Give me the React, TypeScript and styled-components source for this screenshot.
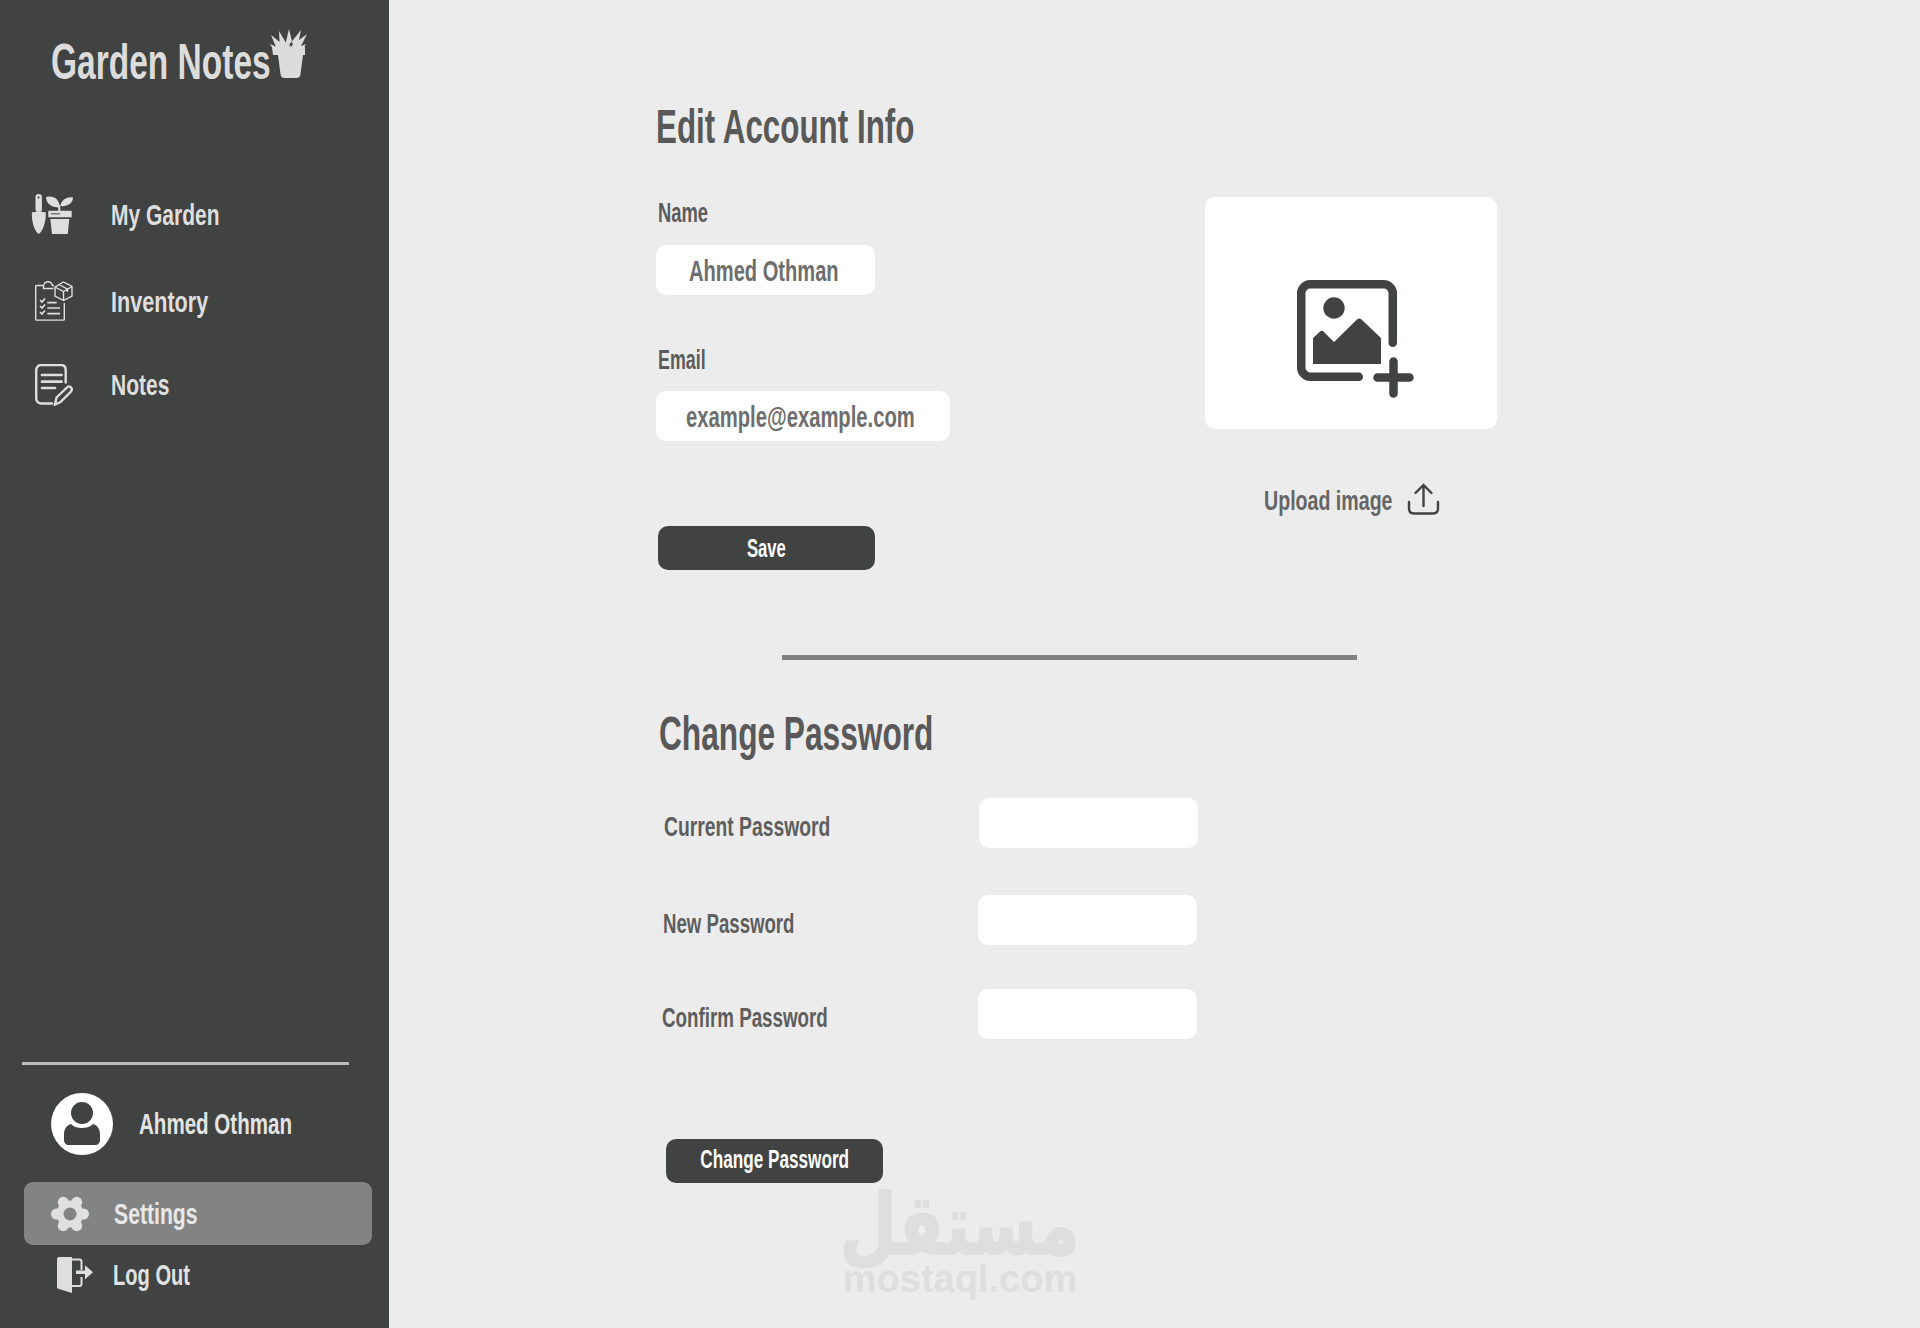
import styled, { createGlobalStyle } from 'styled-components';

const GlobalStyle = createGlobalStyle`
  html, body {
    margin: 0;
    padding: 0;
    background: #ececec;
  }
  * {
    box-sizing: border-box;
  }
`;

const Page = styled.div`
  display: flex;
  width: 1920px;
  height: 1328px;
  overflow: hidden;
  position: relative;
  font-family: "Liberation Sans Narrow", "Liberation Sans", sans-serif;
  font-weight: 700;
`;

// the reference font is very condensed, nothing installed is that narrow
const Squeeze = styled.span<{ $x: number; $center?: boolean }>`
  display: inline-block;
  white-space: nowrap;
  transform: scaleX(${({ $x }) => $x});
  transform-origin: ${({ $center }) => ($center ? 'center' : 'left')};
`;

const Sidebar = styled.aside`
  width: 389px;
  height: 1328px;
  flex: none;
  background: #414342;
  color: #dedede;
  display: flex;
  flex-direction: column;
`;

const Logo = styled.div`
  display: flex;
  align-items: flex-end;
  height: 50px;
  margin: 29px 0 0 51px;
  font-size: 50px;
  line-height: 50px;
`;

const LogoText = styled.div`
  width: 219px;
  height: 46px;
  margin-bottom: -4px;
  color: #dcdcdc;
`;

const Nav = styled.nav`
  display: flex;
  flex-direction: column;
  margin-top: 95px;
`;

const NavItem = styled.div<{ $top: number; $iconLeft: number }>`
  display: flex;
  align-items: center;
  height: 82px;
  margin-top: ${({ $top }) => $top}px;
  padding-left: ${({ $iconLeft }) => $iconLeft}px;
  font-size: 30px;
`;

const NavIcon = styled.div<{ $width: number }>`
  width: ${({ $width }) => $width}px;
  display: flex;
  flex: none;
`;

const SidebarBottom = styled.div`
  margin-top: auto;
  padding-bottom: 31px;
  display: flex;
  flex-direction: column;
`;

const SideRule = styled.div`
  width: 327px;
  height: 3px;
  margin-left: 22px;
  background: #bcbcbc;
`;

const UserRow = styled.div`
  display: flex;
  align-items: center;
  gap: 26px;
  margin: 28px 0 0 51px;
  font-size: 30px;
  color: #e4e4e4;
`;

const SettingsRow = styled.div`
  display: flex;
  align-items: center;
  width: 348px;
  height: 63px;
  margin: 27px 0 0 24px;
  padding-left: 27px;
  gap: 25px;
  border-radius: 9px;
  background: #828483;
  font-size: 30px;
  color: #e8e8e8;
`;

const LogoutRow = styled.div`
  display: flex;
  align-items: center;
  height: 44px;
  margin: 8px 0 0 57px;
  gap: 20px;
  font-size: 30px;
  color: #e2e2e2;
`;

const Main = styled.main`
  flex: 1;
  padding: 100px 0 0 267px;
  color: #5a5a5a;
`;

const TopRow = styled.div`
  display: flex;
`;

const AccountForm = styled.section`
  width: 549px;
`;

const Heading = styled.h2<{ $left?: number }>`
  margin: 0 0 0 ${({ $left }) => $left ?? 0}px;
  height: 50px;
  font-size: 49px;
  line-height: 52px;
  font-weight: 700;
  color: #595959;
`;

const FieldLabel = styled.div<{ $top: number }>`
  height: 24px;
  line-height: 25px;
  margin: ${({ $top }) => $top}px 0 0 2px;
  font-size: 28px;
  color: #5c5c5c;
`;

const TextBox = styled.div<{ $width: number; $top: number; $pad: number }>`
  display: flex;
  align-items: center;
  width: ${({ $width }) => $width}px;
  height: 50px;
  margin-top: ${({ $top }) => $top}px;
  padding: 1px 0 0 ${({ $pad }) => $pad}px;
  border-radius: 10px;
  background: #fff;
  color: #6e6e6e;
  font-size: 30px;
`;

const DarkButton = styled.button<{ $left: number; $top: number; $up?: number }>`
  display: flex;
  align-items: center;
  justify-content: center;
  width: 217px;
  height: 44px;
  margin: ${({ $top }) => $top}px 0 0 ${({ $left }) => $left}px;
  padding: 0 0 ${({ $up }) => $up ?? 0}px;
  border: none;
  border-radius: 10px;
  background: #414342;
  color: #fff;
  font-family: inherit;
  font-weight: 700;
  font-size: 26px;
`;

const ImageColumn = styled.section`
  width: 292px;
  margin-top: 97px;
`;

const ImageBox = styled.div`
  display: flex;
  align-items: center;
  justify-content: center;
  height: 232px;
  padding: 52px 0 0 10px;
  border-radius: 10px;
  background: #fff;
`;

const UploadRow = styled.div`
  display: flex;
  align-items: center;
  margin: 53px 0 0 59px;
  height: 34px;
  color: #666;
  font-size: 28px;
`;

const UploadLabel = styled.div`
  width: 143px;
  padding-top: 3px;
`;

const SectionRule = styled.div`
  width: 575px;
  height: 5px;
  margin: 85px 0 47px 126px;
  background: #808080;
`;

const PasswordRow = styled.div<{ $top: number; $left: number }>`
  display: flex;
  height: 50px;
  margin-top: ${({ $top }) => $top}px;
  padding-left: ${({ $left }) => $left}px;
`;

const PasswordLabel = styled.div<{ $width: number }>`
  width: ${({ $width }) => $width}px;
  padding-top: 14px;
  line-height: 30px;
  font-size: 27px;
  color: #5e5e5e;
`;

const PasswordBox = styled.div`
  width: 219px;
  height: 50px;
  border-radius: 10px;
  background: #fff;
`;

const Watermark = styled.div`
  position: absolute;
  left: 844px;
  top: 1189px;
  width: 232px;
  display: flex;
  flex-direction: column;
  align-items: center;
  color: #dedede;
  pointer-events: none;
`;

const WatermarkArabic = styled.div`
  font-family: "DejaVu Sans", sans-serif;
  font-weight: 700;
  font-size: 84px;
  line-height: 72px;
  -webkit-text-stroke: 2px #dedede;
`;

const WatermarkLatin = styled.div`
  font-family: "Liberation Sans", sans-serif;
  font-weight: 700;
  font-size: 38px;
  line-height: 36px;
`;

function PlantLogo() {
  return (
    <svg width="37" height="50" viewBox="0 0 37 50" fill="#dcdcdc">
      <path d="M2 18h33v8h-2l-2.500 19c-.3 2.500-1.500 4-4 4h-12c-2.500 0-3.700-1.500-4-4L8 26H3z" />
      <path d="M14 21L19 0l5 21zM10 21L9 2l10 17zM8 23L1 6l15 12zM6 25L0 15l13 6zM27 21l4-20-12 15zM28 23l9-18-17 13zM30 25l6-10-14 6z" />
    </svg>
  );
}

function GardenIcon() {
  return (
    <svg width="42" height="42" viewBox="0 0 42 42" fill="#dedede">
      <rect x="4.500" y="0" width="6.400" height="18" rx="3.200" />
      <rect x="6.800" y="2.300" width="1.500" height="2.200" fill="#414342" />
      <path d="M1 18c2 1 4-1 6.700-1s5 2 7 1c.8 8-2.700 20-7 22-4.200-2-7.700-14-6.700-22z" />
      <path d="M28.500 13.500C22 14 15 10 15 3c7-2 14 2 13.500 10.500zM29.500 12c.5-6 6.500-10 12.500-8.500 0 5.500-6 9.500-12.500 8.500z" />
      <rect x="27.300" y="11" width="2" height="6" />
      <path d="M17.300 16.800h23.400v6.500H17.300z" />
      <rect x="20" y="19.300" width="9" height="1" fill="#414342" />
      <path d="M19.300 25h19l-1.600 15H21z" />
    </svg>
  );
}

function InventoryIcon() {
  return (
    <svg width="38" height="42" viewBox="0 0 38 42" fill="none" stroke="#dedede" strokeWidth="1.400">
      <path d="M19 4.500h-1.500C16.500 1.500 14.500.7 13 .7S9.500 1.500 8.500 4.500H1.500c-.5 0-.8.3-.8.8v33c0 .5.3.8.8.8h27c.5 0 .8-.3.8-.8V22" />
      <path d="M8.500 4.500v3h10" />
      <path d="M20 6l8.500-5L37 5.500v9.500l-8.500 4.500L20 15zM20 6l8.500 4.500L37 5.500M28.500 10.500v9M24 3.500l8.500 4.600v3" />
      <path d="M5 19l2 2 3-3.500M5 25l2 2 3-3.500M5 31l2 2 3-3.500" strokeWidth="1.700" />
      <path d="M12.300 21.700h9.400M12.300 27H25M12.300 32.700H25" strokeWidth="1.700" />
    </svg>
  );
}

function NotesIcon() {
  return (
    <svg width="38" height="42" viewBox="0 0 38 42" fill="none" stroke="#dedede" strokeWidth="2.400" strokeLinecap="round">
      <path d="M17 39.500H6.500c-3 0-5.300-2-5.300-5V6.500c0-3.500 2.300-5.500 5.300-5.500h19.500c3 0 4.700 2 4.700 5v12.500" />
      <path d="M7 11h19.500M7 17.700h19.500M7 24h13" strokeWidth="2.700" />
      <path d="M20 40.500l1.500-7L32 23.500c1.500-1.500 3-1.500 4 0 1 1 1 2.500 0 4L25.500 38z" />
    </svg>
  );
}

function Avatar() {
  return (
    <svg width="62" height="62" viewBox="0 0 62 62">
      <circle cx="31" cy="31" r="31" fill="#fff" />
      <circle cx="31" cy="20" r="11" fill="#414342" />
      <path d="M20 31c3 3 7 4 11 4s8-1 11-4c4 1 7 5 7 10v6c0 3-2 5-5 5H18c-3 0-5-2-5-5v-6c0-5 3-9 7-10z" fill="#414342" />
    </svg>
  );
}

const gearLobes = [0, 60, 120, 180, 240, 300];

function GearIcon() {
  return (
    <svg width="38" height="38" viewBox="-19 -19 38 38" fill="#e0e0e0">
      <circle r="13.500" />
      {gearLobes.map(angle => (
        <circle
          key={angle}
          cx={13.5 * Math.cos((angle * Math.PI) / 180)}
          cy={13.5 * Math.sin((angle * Math.PI) / 180)}
          r="5.500"
        />
      ))}
      <circle r="6.500" fill="#828483" />
    </svg>
  );
}

function LogoutIcon() {
  return (
    <svg width="36" height="37" viewBox="0 0 36 37" fill="#dedede">
      <path d="M2 0h13v36L2 32c-1 0-2-1-2-2V2c0-1 1-2 2-2z" />
      <path d="M15 2.500h7.500c1 0 2 1 2 2V13M24.500 20v7c0 1-1 2-2 2H15" fill="none" stroke="#dedede" strokeWidth="2" />
      <path d="M19 13.500h9V8.300l8 7-8 7v-5.200h-9z" />
    </svg>
  );
}

function ImagePlusIcon() {
  return (
    <svg width="118" height="118" viewBox="0 0 118 118">
      <path
        d="M61.750 96.750H13c-4.500 0-8.750-4.250-8.750-8.750V13c0-4.500 4.250-8.750 8.750-8.750h74c4.500 0 8.750 4.250 8.750 8.750v49.750"
        fill="none"
        stroke="#414342"
        strokeWidth="8.500"
        strokeLinecap="round"
      />
      <circle cx="37" cy="28" r="10.700" fill="#414342" />
      <path d="M16 58l7-6.500c1-1 2.500-1 3.500 0L37 62l23-22.500c1.500-1.500 3-1.500 4.500 0L84 58v26H16z" fill="#414342" />
      <path d="M96.500 81.500v32M80.500 97.500h32" stroke="#414342" strokeWidth="8.500" strokeLinecap="round" />
    </svg>
  );
}

function UploadIcon() {
  return (
    <svg width="33" height="33" viewBox="0 0 33 33" fill="none" stroke="#414342" strokeWidth="2.400" strokeLinecap="round">
      <path d="M16.500 23V2M8.500 10l8-8 8 8" />
      <path d="M2 19v6.500c0 3 2 5 5 5h19c3 0 5-2 5-5V19" />
    </svg>
  );
}

const navItems = [
  { label: 'My Garden', icon: <GardenIcon />, top: 0, iconLeft: 31, iconWidth: 80, squeeze: 0.7 },
  { label: 'Inventory', icon: <InventoryIcon />, top: 5, iconLeft: 35, iconWidth: 76, squeeze: 0.72 },
  { label: 'Notes', icon: <NotesIcon />, top: 1, iconLeft: 35, iconWidth: 76, squeeze: 0.7 },
];

const passwordRows = [
  { label: 'Current Password', top: 41, left: 8, width: 315, squeeze: 0.715 },
  { label: 'New Password', top: 47, left: 7, width: 315, squeeze: 0.69 },
  { label: 'Confirm Password', top: 44, left: 6, width: 316, squeeze: 0.695 },
];

export default function App() {
  return (
    <Page>
      <GlobalStyle />
      <Sidebar>
        <Logo>
          <LogoText>
            <Squeeze $x={0.67}>Garden Notes</Squeeze>
          </LogoText>
          <PlantLogo />
        </Logo>
        <Nav>
          {navItems.map(item => (
            <NavItem key={item.label} $top={item.top} $iconLeft={item.iconLeft}>
              <NavIcon $width={item.iconWidth}>{item.icon}</NavIcon>
              <Squeeze $x={item.squeeze}>{item.label}</Squeeze>
            </NavItem>
          ))}
        </Nav>
        <SidebarBottom>
          <SideRule />
          <UserRow>
            <Avatar />
            <Squeeze $x={0.685}>Ahmed Othman</Squeeze>
          </UserRow>
          <SettingsRow>
            <GearIcon />
            <Squeeze $x={0.706}>Settings</Squeeze>
          </SettingsRow>
          <LogoutRow>
            <LogoutIcon />
            <Squeeze $x={0.67}>Log Out</Squeeze>
          </LogoutRow>
        </SidebarBottom>
      </Sidebar>
      <Main>
        <TopRow>
          <AccountForm>
            <Heading>
              <Squeeze $x={0.64}>Edit Account Info</Squeeze>
            </Heading>
            <FieldLabel $top={50}>
              <Squeeze $x={0.656}>Name</Squeeze>
            </FieldLabel>
            <TextBox $width={219} $top={21} $pad={33}>
              <Squeeze $x={0.67}>Ahmed Othman</Squeeze>
            </TextBox>
            <FieldLabel $top={52}>
              <Squeeze $x={0.637}>Email</Squeeze>
            </FieldLabel>
            <TextBox $width={294} $top={20} $pad={30}>
              <Squeeze $x={0.674}>example@example.com</Squeeze>
            </TextBox>
            <DarkButton $left={2} $top={85}>
              <Squeeze $x={0.64} $center>Save</Squeeze>
            </DarkButton>
          </AccountForm>
          <ImageColumn>
            <ImageBox>
              <ImagePlusIcon />
            </ImageBox>
            <UploadRow>
              <UploadLabel>
                <Squeeze $x={0.7}>Upload image</Squeeze>
              </UploadLabel>
              <UploadIcon />
            </UploadRow>
          </ImageColumn>
        </TopRow>
        <SectionRule />
        <Heading $left={3}>
          <Squeeze $x={0.646}>Change Password</Squeeze>
        </Heading>
        {passwordRows.map(row => (
          <PasswordRow key={row.label} $top={row.top} $left={row.left}>
            <PasswordLabel $width={row.width}>
              <Squeeze $x={row.squeeze}>{row.label}</Squeeze>
            </PasswordLabel>
            <PasswordBox />
          </PasswordRow>
        ))}
        <DarkButton $left={10} $top={100} $up={4}>
          <Squeeze $x={0.66} $center>Change Password</Squeeze>
        </DarkButton>
      </Main>
      <Watermark>
        <WatermarkArabic>
          <Squeeze $x={0.78} $center>مستقل</Squeeze>
        </WatermarkArabic>
        <WatermarkLatin>mostaql.com</WatermarkLatin>
      </Watermark>
    </Page>
  );
}
